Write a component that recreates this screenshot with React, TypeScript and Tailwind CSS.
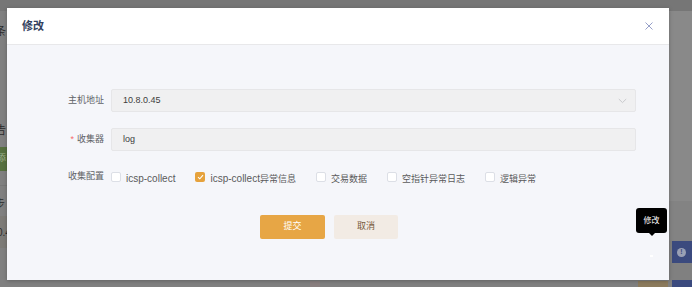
import React from "react";

const cjk = "font-['Liberation_Sans','Noto_Sans_CJK_SC',sans-serif]";

interface Option {
  label: string;
  tail?: string;
  checked?: boolean;
}

const collectOptions: Option[] = [
  { label: "icsp-collect" },
  { label: "icsp-collect", tail: "异常信息", checked: true },
  { label: "", tail: "交易数据" },
  { label: "", tail: "空指针异常日志" },
  { label: "", tail: "逻辑异常" },
];

const Checkbox: React.FC<{ checked?: boolean }> = ({ checked }) =>
  checked ? (
    <span className="flex h-[10px] w-[10px] items-center justify-center rounded-[2px] bg-[#e6a23c]">
      <svg width="7" height="6" viewBox="0 0 7 6" fill="none">
        <path d="M1 3.2 L2.8 4.8 L6 1.2" stroke="#fff" strokeWidth="1.1" />
      </svg>
    </span>
  ) : (
    <span className="h-[10px] w-[10px] rounded-[2px] border border-[#dcdfe6] bg-white" />
  );

const FormRow: React.FC<{ label: string; required?: boolean; children: React.ReactNode }> = ({
  label,
  required,
  children,
}) => (
  <div className="flex items-center">
    <div className="w-[97px] text-right text-[9px] text-[#606266]">
      {required && <span className="mr-[3px] text-[#f56c6c]">*</span>}
      {label}
    </div>
    <div className="ml-[7px] flex-1">{children}</div>
  </div>
);

export default function App() {
  return (
    <div className={`relative h-[287px] w-[692px] overflow-hidden bg-[#808080] ${cjk}`}>
      {/* page behind the mask */}
      <div className="flex h-full flex-col">
        <div className="h-[11px] bg-[#767676]" />
        <div className="flex flex-1">
          {/* left edge of page */}
          <div className="w-[7px] overflow-hidden text-[11px] text-[#2b2b2b]">
            <div className="h-[14px]" />
            <div className="ml-[-5px] h-[12px] leading-[12px]">条</div>
            <div className="h-[87px]" />
            <div className="ml-[-5px] h-[12px] leading-[12px]">告</div>
            <div className="h-[11px]" />
            <div className="ml-[-3px] flex h-[24px] items-center bg-[#56703f] text-[9px] text-[#9fb08f]">添</div>
            <div className="h-[15px] border-b border-[#777]" />
            <div className="ml-[-6px] mt-[12px] h-[12px] leading-[12px]">步</div>
            <div className="mt-[6px] flex h-[32px] items-center bg-[#7d7b77] text-[10px]">
              <span className="ml-[-3px]">0.4</span>
            </div>
          </div>
          <div className="flex-1" />
          {/* right edge of page */}
          <div className="flex w-[23px] flex-col">
            <div className="h-[190px] bg-[#898989]" />
            <div className="h-[40px] bg-[#838383]" />
            <div className="ml-[3px] flex h-[22px] items-center bg-[#3b4a7e] pl-[5px]">
              <span className="flex h-[9px] w-[9px] items-center justify-center rounded-full bg-[#9aa0b4] text-[7px] font-bold text-[#3b4a7e]">
                !
              </span>
            </div>
            <div className="flex-1" />
            <div className="ml-[3px] h-[7px] bg-[#3b4a7e]" />
          </div>
        </div>
      </div>
      <div className="absolute bottom-0 left-[638px] h-[6px] w-[30px] bg-[#8c7b5d]" />
      <div className="absolute bottom-0 left-[310px] h-[6px] w-[10px] bg-[#8a7f7f]" />

      {/* dialog */}
      <div className="absolute left-[7px] top-[8px] flex h-[272px] w-[662px] flex-col bg-[#f5f6fa] shadow-[0_1px_4px_rgba(0,0,0,0.25)]">
        <div className="flex h-[37px] items-center justify-between border-b border-[#e8e8ea] bg-white pl-[15px] pr-[16px]">
          <span className="text-[11px] font-bold text-[#33415e]">修改</span>
          <svg width="8" height="8" viewBox="0 0 8 8">
            <path d="M0.5 0.5 L7.5 7.5 M7.5 0.5 L0.5 7.5" stroke="#8a94c2" strokeWidth="0.9" />
          </svg>
        </div>

        <div className="relative flex-1 pr-[33px] pt-[44px]">
          <FormRow label="主机地址">
            <div className="flex h-[23px] items-center justify-between rounded-[2px] border border-[#e6e6e8] bg-[#f0f0f1] pl-[11px] pr-[8px]">
              <span className="text-[9px] text-[#3d3d3d]">10.8.0.45</span>
              <svg width="9" height="6" viewBox="0 0 9 6" fill="none">
                <path d="M0.8 1 L4.5 4.6 L8.2 1" stroke="#c8c9cc" strokeWidth="1" />
              </svg>
            </div>
          </FormRow>

          <div className="mt-[16px]">
            <FormRow label="收集器" required>
              <div className="flex h-[23px] items-center rounded-[2px] border border-[#e6e6e8] bg-[#f0f0f1] pl-[11px]">
                <span className="text-[9px] text-[#3d3d3d]">log</span>
              </div>
            </FormRow>
          </div>

          <div className="mt-[14px]">
            <FormRow label="收集配置">
              <div className="flex items-center">
                {collectOptions.map((o, i) => (
                  <label key={i} className="mr-[20px] flex items-center gap-[5px]">
                    <Checkbox checked={o.checked} />
                    <span className="whitespace-nowrap text-[#5a5a5a]">
                      {o.label && <span className="text-[10px]">{o.label}</span>}
                      {o.tail && <span className="text-[9px]">{o.tail}</span>}
                    </span>
                  </label>
                ))}
              </div>
            </FormRow>
          </div>

          <div className="ml-[253px] mt-[26px] flex gap-[9px]">
            <button className="flex h-[24px] w-[65px] items-center justify-center rounded-[2px] bg-[#e7a645] text-[9px] text-white">
              提交
            </button>
            <button className="flex h-[24px] w-[64px] items-center justify-center rounded-[2px] bg-[#f2ebe4] text-[9px] text-[#76593c]">
              取消
            </button>
          </div>
        </div>
      </div>

      {/* tooltip */}
      <div className="absolute left-[636px] top-[208px] flex flex-col items-center">
        <div className="flex h-[25px] w-[31px] items-center justify-center rounded-[3px] bg-black text-[8px] text-white">
          修改
        </div>
        <div className="h-0 w-0 border-x-[3px] border-t-[3px] border-x-transparent border-t-black" />
        <div className="mt-[19px] h-[2px] w-[3px] bg-white" />
      </div>
    </div>
  );
}
